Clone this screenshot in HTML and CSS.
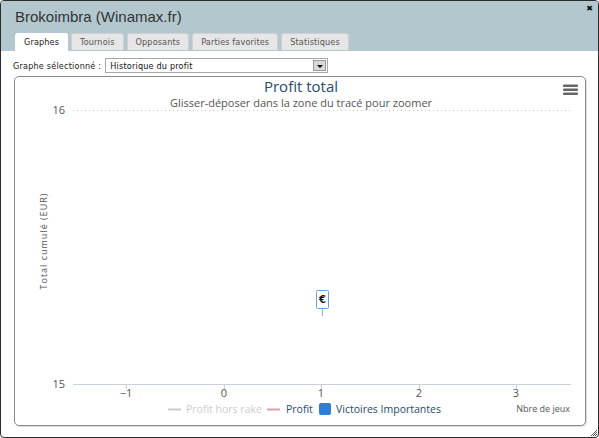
FILE: index.html
```html
<!DOCTYPE html>
<html lang="fr">
<head>
<meta charset="utf-8">
<title>Brokoimbra (Winamax.fr)</title>
<link rel="stylesheet" href="styles.css">
</head>
<body>
<div class="win">
  <div class="head">
    <div class="title">Brokoimbra (Winamax.fr)</div>
    <span class="close">&#x2716;</span>
    <div class="tabs">
      <div class="tab active">Graphes</div>
      <div class="tab">Tournois</div>
      <div class="tab">Opposants</div>
      <div class="tab">Parties favorites</div>
      <div class="tab">Statistiques</div>
    </div>
  </div>
  <div class="body">
    <div class="selrow">
      <span class="lbl">Graphe sélectionné :</span>
      <div class="select"><span class="val">Historique du profit</span><span class="btn"><span class="tri"></span></span></div>
    </div>
    <div class="chart">
      <svg class="plot" width="570" height="348" viewBox="14 77 570 348" xmlns="http://www.w3.org/2000/svg">
        <line x1="72" y1="110.5" x2="570" y2="110.5" class="grid"/>
        <line x1="72" y1="384.5" x2="570" y2="384.5" class="axis"/>
        <g class="ticks">
          <line x1="125.5" y1="384" x2="125.5" y2="389"/>
          <line x1="223.5" y1="384" x2="223.5" y2="389"/>
          <line x1="320.5" y1="384" x2="320.5" y2="389"/>
          <line x1="418.5" y1="384" x2="418.5" y2="389"/>
          <line x1="515.5" y1="384" x2="515.5" y2="389"/>
        </g>
        <text x="64" y="114" class="ylab" text-anchor="end">16</text>
        <text x="64" y="388" class="ylab" text-anchor="end">15</text>
        <g class="xlab" text-anchor="middle">
          <text x="125" y="397">−1</text>
          <text x="223" y="397">0</text>
          <text x="320" y="397">1</text>
          <text x="418" y="397">2</text>
          <text x="515" y="397">3</text>
        </g>
        <text class="ytitle" text-anchor="middle" transform="translate(46 241) rotate(-90)">Total cumulé (EUR)</text>
        <line x1="321.5" y1="308" x2="321.5" y2="316" class="stem"/>
        <rect x="315.5" y="290.5" width="12" height="18" rx="1" class="flag"/>
        <text x="321.5" y="303" class="flagtxt" text-anchor="middle">€</text>
        <g class="legend">
          <line x1="167" y1="409.5" x2="180" y2="409.5" class="lg-grey"/>
          <text x="185" y="413" class="lt-grey">Profit hors rake</text>
          <line x1="266" y1="409.5" x2="279" y2="409.5" class="lg-red"/>
          <text x="285" y="413" class="lt">Profit</text>
          <rect x="318" y="403" width="12" height="12" rx="2" class="lg-blue"/>
          <text x="335" y="413" class="lt">Victoires Importantes</text>
        </g>
        <text x="569" y="412" class="xtitle" text-anchor="end">Nbre de jeux</text>
      </svg>
      <div class="chead">
        <div class="ctitle">Profit total</div>
        <div class="csub">Glisser-déposer dans la zone du tracé pour zoomer</div>
        <svg class="menu" width="15" height="11" viewBox="0 0 15 11" xmlns="http://www.w3.org/2000/svg">
          <rect x="0" y="0.5" width="15" height="2.5" rx="1"/>
          <rect x="0" y="4.5" width="15" height="2.5" rx="1"/>
          <rect x="0" y="8.5" width="15" height="2.5" rx="1"/>
        </svg>
      </div>
    </div>
  </div>
  <svg class="grip" width="8" height="8" viewBox="0 0 8 8" xmlns="http://www.w3.org/2000/svg">
    <path d="M7 1 L1 7 M7 3 L3 7 M7 5 L5 7" stroke="#555" stroke-width="1"/>
  </svg>
</div>
</body>
</html>
```
FILE: styles.css
```css
html, body {
  margin: 0;
  padding: 0;
  background: #ffffff;
}
.win {
  position: relative;
  width: 597px;
  height: 436px;
  border: 1px solid #2a2a2a;
  border-radius: 4px;
  overflow: hidden;
  background: #ffffff;
  font-family: "DejaVu Sans", Verdana, sans-serif;
}
.head {
  position: relative;
  background: #b3c7ce;
  height: 50px;
  box-sizing: border-box;
  padding: 7px 0 0 14px;
  display: flex;
  flex-direction: column;
}
.title {
  font-family: "Liberation Sans", Arial, sans-serif;
  font-size: 15px;
  color: #333333;
  line-height: 18px;
  height: 18px;
}
.close {
  position: absolute;
  right: 5px;
  top: 3px;
  font-size: 8px;
  color: #111;
}
.tabs {
  display: flex;
  gap: 3px;
  margin-top: 7px;
}
.tab {
  height: 17px;
  box-sizing: border-box;
  border: 1px solid #d0d0d0;
  border-bottom: none;
  border-radius: 3px 3px 0 0;
  background: #e6e6e6;
  color: #555555;
  font-family: "DejaVu Sans Condensed", "DejaVu Sans", sans-serif;
  font-size: 9px;
  letter-spacing: 0.15px;
  line-height: 16px;
  padding: 0 8px;
}
.tab.active {
  background: #ffffff;
  color: #222222;
  height: 18px;
  border-color: #ffffff;
}
.body {
  padding: 7px 12px 0 12px;
}
.selrow {
  display: flex;
  align-items: center;
  height: 15px;
  gap: 4px;
}
.lbl {
  font-family: "DejaVu Sans Condensed", "DejaVu Sans", sans-serif;
  font-size: 9px;
  letter-spacing: 0.2px;
  color: #222;
}
.select {
  width: 223px;
  height: 15px;
  box-sizing: border-box;
  border: 1px solid #a8a8a8;
  display: flex;
  align-items: center;
  justify-content: space-between;
  padding-left: 4px;
}
.val {
  font-family: "DejaVu Sans Condensed", "DejaVu Sans", sans-serif;
  font-size: 9px;
  letter-spacing: 0.2px;
  color: #111;
}
.btn {
  width: 13px;
  height: 11px;
  margin-right: 1px;
  background: #d8d8d8;
  border: 1px solid #999;
  box-sizing: border-box;
  display: flex;
  align-items: flex-end;
  justify-content: center;
  padding-bottom: 2px;
}
.tri {
  width: 0;
  height: 0;
  border-left: 3px solid transparent;
  border-right: 3px solid transparent;
  border-top: 3px solid #000;
}
.chart {
  position: relative;
  margin-top: 3px;
  margin-left: 1px;
  width: 572px;
  height: 350px;
  box-sizing: border-box;
  border: 1px solid #8a8a8a;
  border-radius: 5px;
  box-shadow: 1px 1px 1px rgba(0,0,0,0.15);
  overflow: hidden;
  font-family: "Open Sans", "DejaVu Sans", sans-serif;
}
.chead {
  position: absolute;
  left: 0;
  right: 0;
  top: 0;
  padding-top: 1px;
  padding-left: 2px;
  text-align: center;
}
.ctitle {
  font-size: 15px;
  line-height: 16px;
  height: 16px;
  color: #274b6d;
}
.csub {
  margin-top: 2px;
  font-size: 11px;
  line-height: 13px;
  color: #555555;
}
.menu {
  position: absolute;
  right: 7px;
  top: 7px;
  fill: #666666;
}
.plot {
  display: block;
}
.grid { stroke: #c8c8c8; stroke-width: 1; stroke-dasharray: 1 3; }
.axis { stroke: #c8d2dc; stroke-width: 1; }
.ticks line { stroke: #c8d2dc; stroke-width: 1; }
.ylab { font-size: 11px; fill: #555; }
.xlab text { font-size: 11px; fill: #555; }
.ytitle { font-size: 9px; fill: #555; letter-spacing: 1px; }
.stem { stroke: #88aee0; stroke-width: 1; }
.flag { fill: #ffffff; stroke: #6f9ee0; stroke-width: 1; }
.flagtxt { font-size: 10px; font-weight: bold; fill: #111; font-family: "DejaVu Sans", sans-serif; }
.lg-grey { stroke: #cccccc; stroke-width: 2; }
.lg-red { stroke: #d9a3a3; stroke-width: 2; }
.lg-blue { fill: #2f7ed8; }
.lt-grey { font-size: 10.5px; fill: #cccccc; }
.lt { font-size: 10.5px; fill: #274b6d; }
.xtitle { font-size: 9px; fill: #555; }
.grip {
  position: absolute;
  right: 0;
  bottom: 0;
}
```
